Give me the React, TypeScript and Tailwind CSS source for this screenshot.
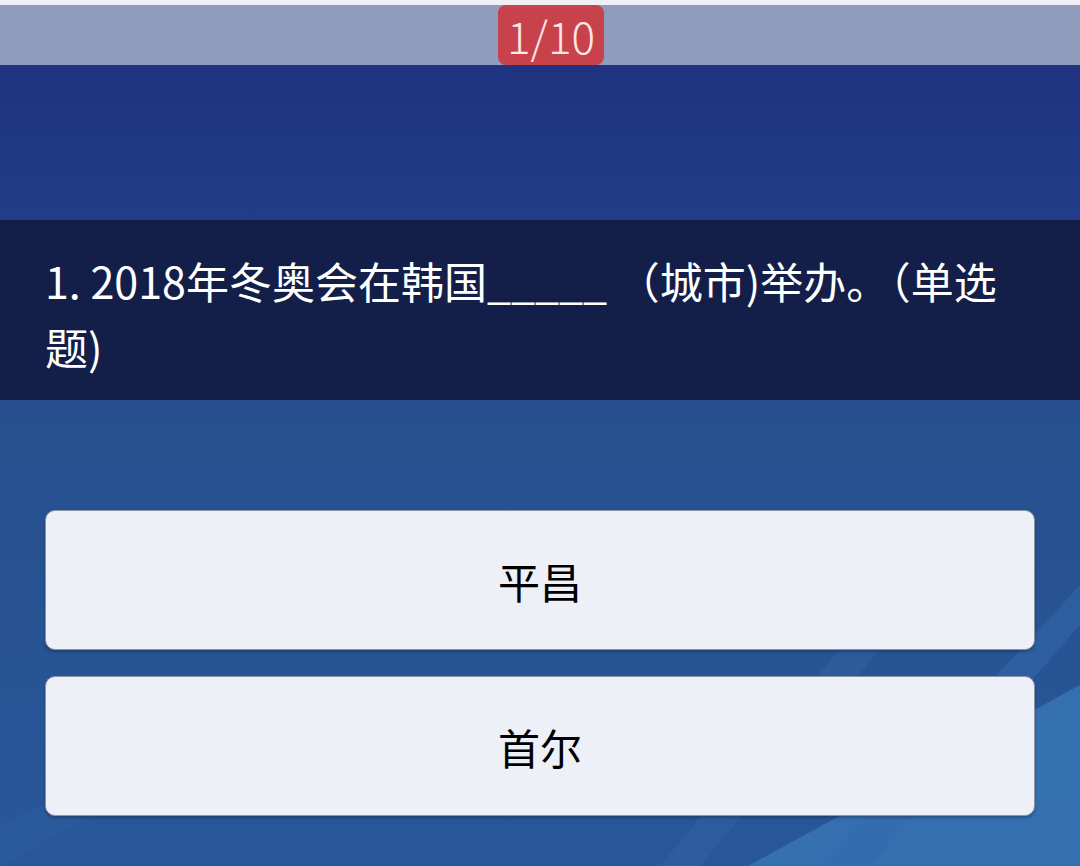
import { useState } from 'react'

const options = ['平昌', '首尔']

export default function App(){
  const [picked, setPicked] = useState<string | null>(null)

  return (
    <div className="flex h-[866px] w-[1080px] flex-col overflow-hidden bg-[#eef0f6] pt-[5px] font-['Noto_Sans_CJK_SC','Noto_Sans',sans-serif]">
      <div className="flex h-[60px] shrink-0 justify-center bg-[#8f9cbc]">
        <div className="ml-[22px] flex w-[106px] items-center justify-center rounded-lg bg-[#c8424c] text-[44px] font-light leading-none text-[#fde6e6]">1/10</div>
      </div>

      <main className="relative flex flex-1 flex-col bg-[linear-gradient(180deg,#1f3380_0%,#223d88_20%,#27508f_45%,#28579a_100%)]">
        <svg className="pointer-events-none absolute inset-0 h-full w-full" viewBox="0 0 1080 801" preserveAspectRatio="none" aria-hidden>
          <polygon points="1080,620 1080,801 748,801" fill="#3a78b8" opacity="0.75" />
          <polygon points="1080,520 1080,560 870,801 820,801" fill="#3169ad" opacity="0.5" />
          <polygon points="860,560 900,560 700,801 660,801" fill="#3a6fb0" opacity="0.25" />
          <polygon points="0,760 260,640 300,640 0,801" fill="#2e62a4" opacity="0.35" />
        </svg>

        <div className="h-[155px] shrink-0" />

        <div className="relative h-[180px] shrink-0 bg-[#131f48] pl-[45px] pr-[60px] pt-[27px] text-[43px] leading-[66px] text-white">
          1. 2018年冬奥会在韩国_____ （城市)举办。（单选题)
        </div>

        <div className="relative flex flex-col gap-[26px] px-[45px] pt-[110px]">
          {options.map((o)=> (
            <button
              key={o}
              onClick={()=>setPicked(o)}
              className={`flex h-[140px] items-center justify-center rounded-[10px] border border-[#8a95a8] text-[42px] text-black shadow-[0_2px_3px_rgba(0,0,0,0.25)] ${picked === o ? 'bg-[#dfe6f3]' : 'bg-[#edf0f6]'}`}>
              {o}
            </button>
          ))}
        </div>
      </main>
    </div>
  )
}
